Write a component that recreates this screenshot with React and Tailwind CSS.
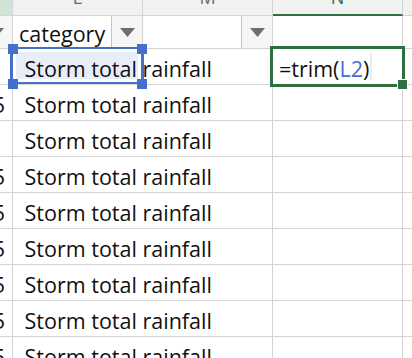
import React from 'react';

const Caret = ({ className = '' }) => (
  <svg width="15" height="9" viewBox="0 0 15 9" className={`shrink-0 ${className}`}>
    <path d="M0 0H15L7.5 9Z" fill="#6e6e6e" />
  </svg>
);

const FilterButton = () => (
  <div className="ml-auto flex h-full w-[31px] shrink-0 items-center justify-center border-l border-[#c4c4c4] bg-[#f6f6f6]">
    <Caret />
  </div>
);

const HeaderCell = ({ label, className = '', letterClass = 'text-[#6a6a6a]' }) => (
  <div className={`h-full w-[130px] shrink-0 overflow-hidden border-r border-b border-[#d4d4d4] bg-[#f1f1f1] text-center ${className}`}>
    <span className={`-mt-[12px] block text-[18px] leading-[18px] ${letterClass}`}>{label}</span>
  </div>
);

const rows = [
  { k: '', selected: true },
  { k: '5' },
  { k: '' },
  { k: '5' },
  { k: '5' },
  { k: '5' },
  { k: '5' },
  { k: '5' },
  { k: '5' },
];

const DataRow = ({ k, selected }) => (
  <div className="relative flex h-[36px] shrink-0 border-b border-[#d4d4d4]">
    <div className="flex w-[13px] shrink-0 justify-end overflow-hidden border-r border-[#d4d4d4] pr-[7px] pt-[2px] leading-[35px]">
      <span>{k}</span>
    </div>
    <div className="w-[130px] shrink-0 pl-[6px] pt-[2px] leading-[35px]">
      <span className="relative z-10 whitespace-pre">{' Storm total rainfall'}</span>
    </div>
    <div className="w-[130px] shrink-0 border-r border-[#d4d4d4]" />
    <div className="w-[130px] shrink-0 border-r border-[#d4d4d4] pl-[6px] pt-[2px] leading-[35px]">
      {selected && (
        <span className="whitespace-pre">
          =trim(<span className="text-[#3f70d0]">L2</span>)
        </span>
      )}
    </div>
    <div className="flex-1" />
  </div>
);

export default function App() {
  return (
    <div className="relative h-[358px] w-[412px] overflow-hidden bg-white font-['Open_Sans',sans-serif] text-[21.5px] text-[#111]">
      {/* column headers */}
      <div className="flex h-[16px]">
        <div className="h-full w-[13px] shrink-0 border-r border-b border-[#d4d4d4] bg-[#cfe4d5]" />
        <HeaderCell label="L" />
        <HeaderCell label="M" />
        <HeaderCell
          label="N"
          className="border-b-2 border-b-[#2e6e41]"
          letterClass="text-[#2e6e41]"
        />
        <div className="h-full flex-1 border-b border-[#d4d4d4] bg-[#f1f1f1]" />
      </div>

      {/* filter row */}
      <div className="flex h-[33px] border-b border-[#d4d4d4]">
        <div className="flex w-[13px] shrink-0 items-center justify-end overflow-hidden border-r border-[#d4d4d4] bg-[#f6f6f6] pr-[8px]">
          <Caret />
        </div>
        <div className="flex w-[130px] shrink-0 border-r border-[#d4d4d4]">
          <span className="pl-[6px] pt-[2px] leading-[32px]">category</span>
          <FilterButton />
        </div>
        <div className="flex w-[130px] shrink-0 border-r border-[#d4d4d4]">
          <FilterButton />
        </div>
        <div className="w-[130px] shrink-0 border-r border-[#d4d4d4]" />
        <div className="flex-1" />
      </div>

      {rows.map((r, i) => (
        <DataRow key={i} {...r} />
      ))}

      {/* selection in L2 */}
      <div className="absolute left-[10px] top-[47px] z-0 h-[37px] w-[134px] border-x-[3px] border-y-2 border-[#4470c9] bg-white p-[3px]">
        <div className="h-full w-full bg-[#e8edf8]" />
      </div>
      <div className="absolute left-[8px] top-[44px] z-0 h-[10px] w-[10px] bg-[#4470c9]" />
      <div className="absolute left-[137px] top-[44px] z-0 h-[10px] w-[10px] bg-[#4470c9]" />
      <div className="absolute left-[8px] top-[79px] z-0 h-[10px] w-[10px] bg-[#4470c9]" />
      <div className="absolute left-[137px] top-[79px] z-0 h-[10px] w-[10px] bg-[#4470c9]" />

      {/* active cell N2 */}
      <div className="absolute left-[270px] top-[46px] z-20 h-[41px] w-[135px] border-[3px] border-[#2e6e41]">
        <div className="absolute left-[97px] top-[4px] h-[28px] w-[2px] bg-[#ececec]" />
      </div>
      <div className="absolute left-[397px] top-[79px] z-30 h-[11px] w-[11px] border border-white bg-[#2e6e41]" />
    </div>
  );
}
